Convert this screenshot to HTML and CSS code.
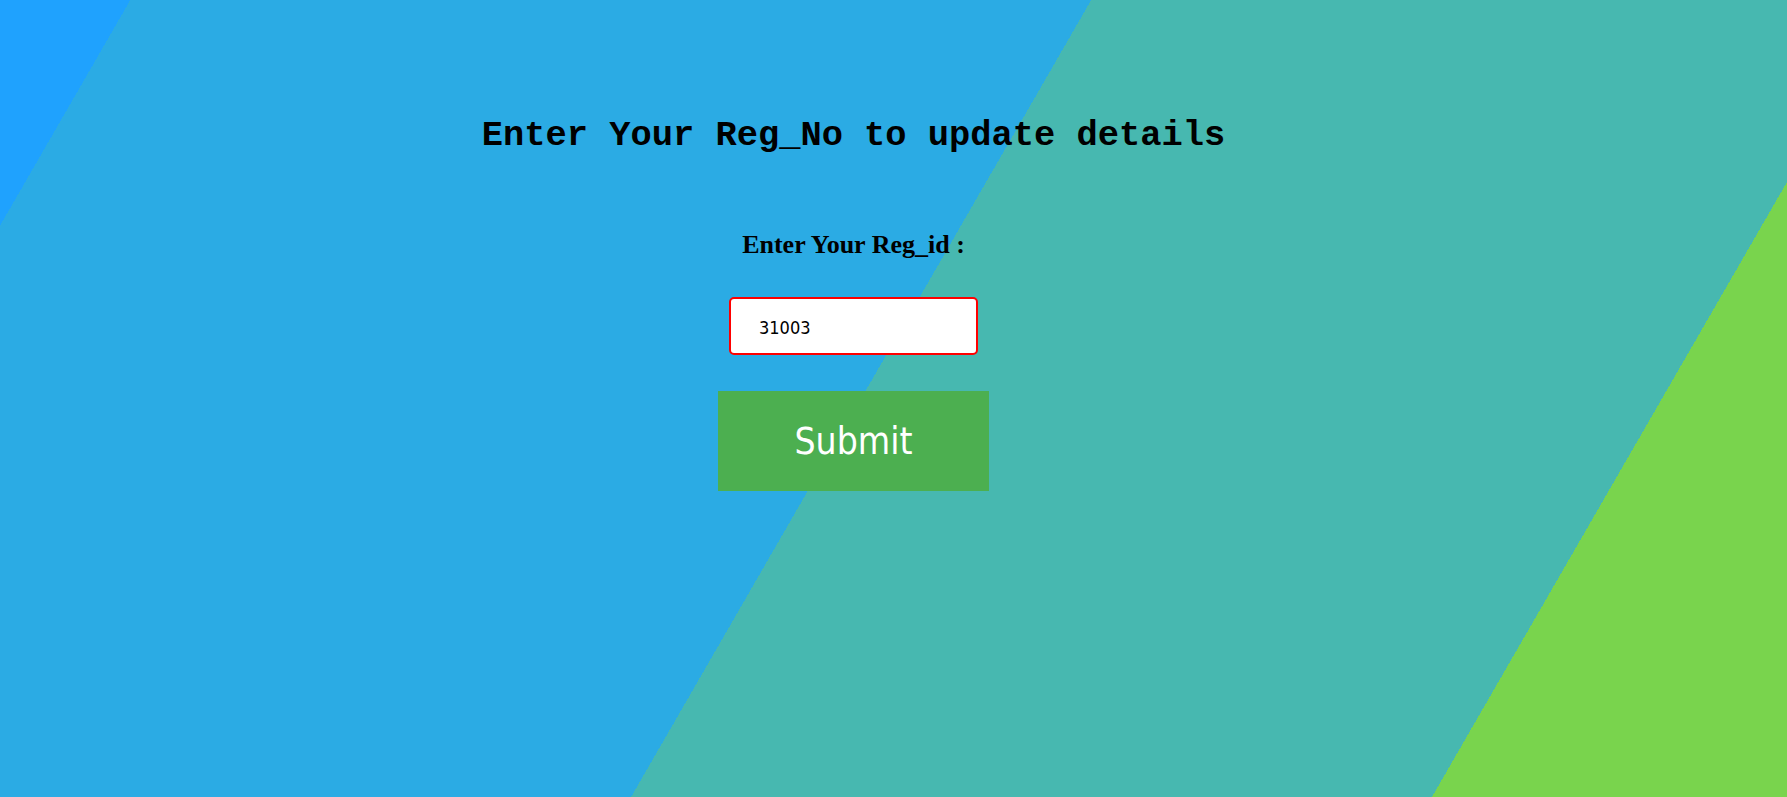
FILE: index.html
```html
<!DOCTYPE html>
<html lang="en">
<head>
<meta charset="utf-8">
<title>Update details</title>
<link rel="stylesheet" href="styles.css">
</head>
<body>
<div class="page">
  <main class="panel">
    <h1 class="title">Enter Your Reg_No to update details</h1>
    <form class="form">
      <label class="label" for="regid">Enter Your Reg_id :</label>
      <input class="field" id="regid" type="text" value="31003">
      <button class="submit" type="button">Submit</button>
    </form>
  </main>
</div>
</body>
</html>
```
FILE: styles.css
```css
html, body {
  margin: 0;
  padding: 0;
}

.page {
  min-height: 100vh;
  width: 100%;
  box-sizing: border-box;
  padding-right: 80px;
  background-image: linear-gradient(120deg,
    #1fa2fe 0%, #1fa2fe 5.8%,
    #2babe4 5.8%, #2babe4 48.56%,
    #47b8b0 48.56%, #47b8b0 84.2%,
    #79d44d 84.2%, #79d44d 100%);
}

.panel {
  display: flex;
  flex-direction: column;
  align-items: center;
  padding-top: 116px;
}

.title {
  margin: 0;
  font-family: "Liberation Mono", "Courier New", monospace;
  font-weight: bold;
  font-size: 35.4px;
  line-height: 40px;
  color: #000;
}

.form {
  display: flex;
  flex-direction: column;
  align-items: center;
  margin-top: 75px;
}

.label {
  font-family: "Liberation Serif", "Times New Roman", serif;
  font-weight: bold;
  font-size: 26px;
  line-height: 28px;
  color: #000;
}

.field {
  margin-top: 38px;
  box-sizing: border-box;
  width: 249px;
  height: 58px;
  padding: 2px 10px 0 28px;
  border: 2px solid #ff0000;
  border-radius: 5px;
  background: #fff;
  font-family: "DejaVu Sans Condensed", "DejaVu Sans", sans-serif;
  font-stretch: condensed;
  font-size: 18px;
  color: #000;
  outline: none;
}

.submit {
  margin-top: 36px;
  width: 271px;
  height: 100px;
  border: none;
  padding: 0;
  background: #4caf50;
  color: #fff;
  font-family: "DejaVu Sans Condensed", "DejaVu Sans", sans-serif;
  font-stretch: condensed;
  font-size: 37px;
  cursor: pointer;
}
```
